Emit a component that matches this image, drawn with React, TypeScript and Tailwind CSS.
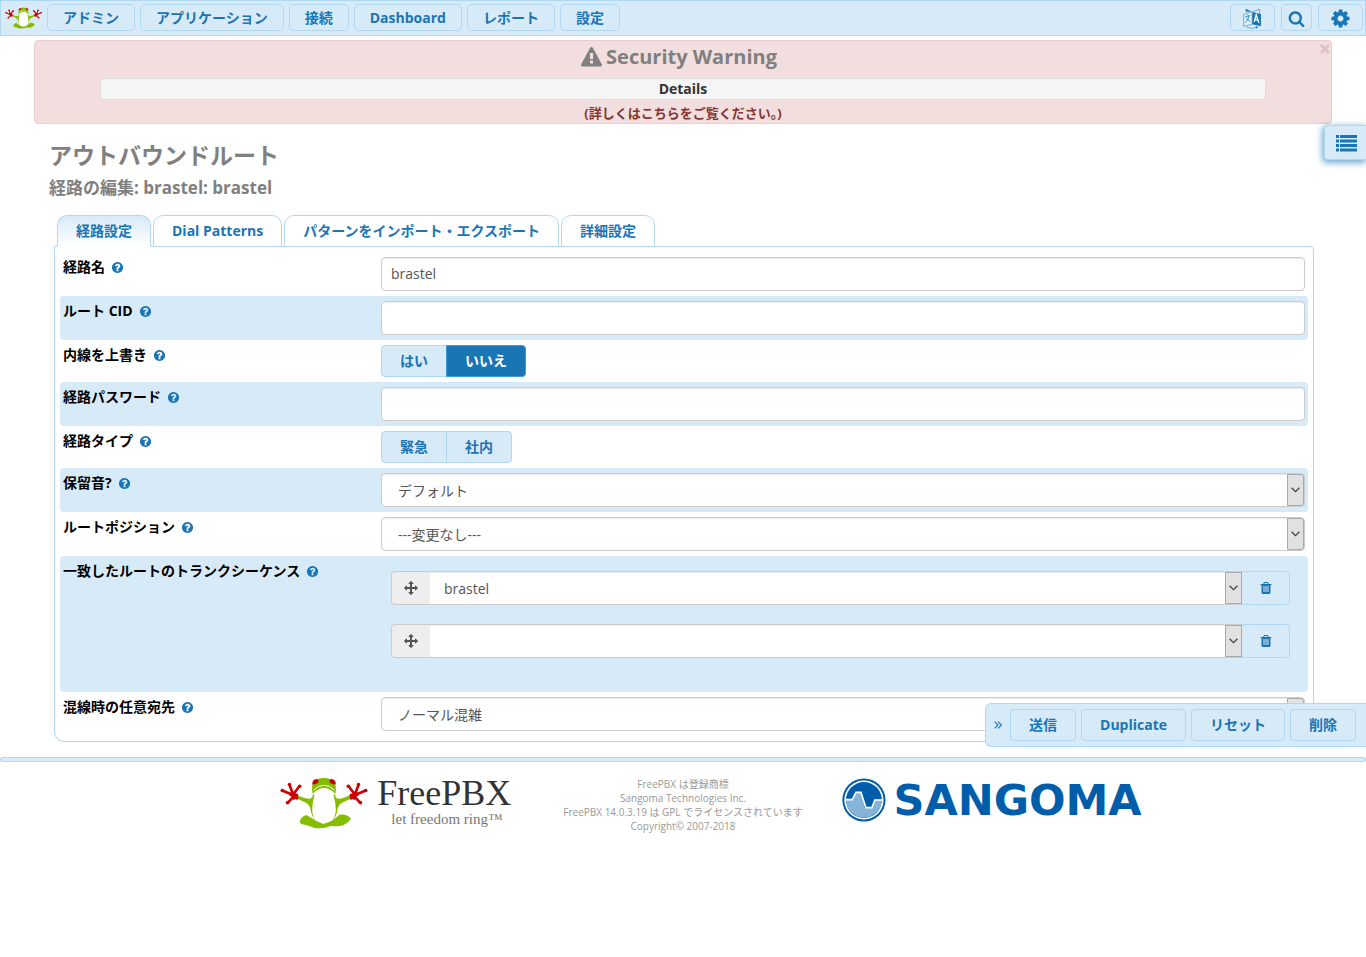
import React, { useState } from 'react';

const ICONS = {
  search:
    'M1216 832q0-185-131.5-316.5t-316.5-131.5-316.5 131.5-131.5 316.5 131.5 316.5 316.5 131.5 316.5-131.5 131.5-316.5zm512 832q0 52-38 90t-90 38q-54 0-90-38l-343-342q-179 124-399 124-143 0-273.5-55.5t-225-150-150-225-55.5-273.5 55.5-273.5 150-225 225-150 273.5-55.5 273.5 55.5 225 150 150 225 55.5 273.5q0 220-124 399l343 343q37 37 37 90z',
  cog: 'M1152 896q0-106-75-181t-181-75-181 75-75 181 75 181 181 75 181-75 75-181zm512-109v222q0 12-8 23t-20 13l-185 28q-19 54-39 91 35 50 107 138 10 12 10 25t-9 23q-27 37-99 108t-94 71q-12 0-26-9l-138-108q-44 23-91 38-16 136-29 186-7 28-36 28h-222q-14 0-24.5-8.5t-11.5-21.5l-28-184q-49-16-90-37l-141 107q-10 9-25 9-14 0-25-11-126-114-165-168-7-10-7-23 0-12 8-23 15-21 51-66.5t54-70.5q-27-50-41-99l-183-27q-13-2-21-12.5t-8-23.5v-222q0-12 8-23t19-13l186-28q14-46 39-92-40-57-107-138-10-12-10-24 0-10 9-23 26-36 98.5-107.5t94.5-71.5q13 0 26 10l138 107q44-23 91-38 16-136 29-186 7-28 36-28h222q14 0 24.5 8.5t11.5 21.5l28 184q49 16 90 37l142-107q9-9 24-9 13 0 25 10 129 119 165 170 7 8 7 22 0 12-8 23-15 21-51 66.5t-54 70.5q26 50 41 98l183 28q13 2 21 12.5t8 23.5z',
  help: 'M1024 1376v-192q0-14-9-23t-23-9h-192q-14 0-23 9t-9 23v192q0 14 9 23t23 9h192q14 0 23-9t9-23zm256-672q0-88-55.5-163t-138.5-116-170-41q-243 0-371 213-15 24 8 42l132 100q7 6 19 6 16 0 25-12 53-68 86-92 34-24 86-24 48 0 85.5 26t37.5 59q0 38-20 61t-68 45q-63 28-115.5 86.5t-52.5 125.5v36q0 14 9 23t23 9h192q14 0 23-9t9-23q0-19 21.5-49.5t54.5-49.5q32-18 49-28.5t46-35 44.5-48 28-60.5 12.5-81zm384 192q0 209-103 385.5t-279.5 279.5-385.5 103-385.5-103-279.5-279.5-103-385.5 103-385.5 279.5-279.5 385.5-103 385.5 103 279.5 279.5 103 385.5z',
  warning:
    'M1024 1375v-190q0-14-9.5-23.5t-22.5-9.5h-192q-13 0-22.5 9.5t-9.5 23.5v190q0 14 9.5 23.5t22.5 9.5h192q13 0 22.5-9.5t9.5-23.5zm-2-374l18-459q0-12-10-19-13-11-24-11h-220q-11 0-24 11-10 7-10 21l17 457q0 10 10 16.5t24 6.5h185q14 0 23.5-6.5t10.5-16.5zm-14-934l768 1408q35 63-2 126-17 29-46.5 46t-63.5 17h-1536q-34 0-63.5-17t-46.5-46q-37-63-2-126l768-1408q17-31 47-49t65-18 65 18 47 49z',
  move: 'M1792 896q0 26-19 45l-256 256q-19 19-45 19t-45-19-19-45v-128h-384v384h128q26 0 45 19t19 45-19 45l-256 256q-19 19-45 19t-45-19l-256-256q-19-19-19-45t19-45 45-19h128v-384h-384v128q0 26-19 45t-45 19-45-19l-256-256q-19-19-19-45t19-45l256-256q19-19 45-19t45 19 19 45v128h384v-384h-128q-26 0-45-19t-19-45 19-45l256-256q19-19 45-19t45 19l256 256q19 19 19 45t-19 45-45 19h-128v384h384v-128q0-26 19-45t45-19 45 19l256 256q19 19 19 45z',
  trash:
    'M704 1376v-704q0-14-9-23t-23-9h-64q-14 0-23 9t-9 23v704q0 14 9 23t23 9h64q14 0 23-9t9-23zm256 0v-704q0-14-9-23t-23-9h-64q-14 0-23 9t-9 23v704q0 14 9 23t23 9h64q14 0 23-9t9-23zm256 0v-704q0-14-9-23t-23-9h-64q-14 0-23 9t-9 23v704q0 14 9 23t23 9h64q14 0 23-9t9-23zm-544-992h448l-48-117q-7-9-17-11h-317q-10 2-17 11zm928 32v64q0 14-9 23t-23 9h-96v948q0 83-47 143.5t-113 60.5h-832q-66 0-113-58.5t-47-141.5v-952h-96q-14 0-23-9t-9-23v-64q0-14 9-23t23-9h309l70-167q15-37 54-63t79-26h320q40 0 79 26t54 63l70 167h309q14 0 23 9t9 23z',
};

function Icon({ name, className }: { name: keyof typeof ICONS; className: string }) {
  return (
    <svg viewBox="0 0 1792 1792" className={className} fill="currentColor" aria-hidden="true">
      <path d={ICONS[name]} />
    </svg>
  );
}

function LanguageIcon() {
  return (
    <svg viewBox="0 0 56 62" className="h-[21px] w-[19px]" aria-hidden="true">
      <path d="M27 12 53 18v36L27 48Z" fill="#1a75b5" />
      <path d="M8 2v9l18-1Z" fill="#1a75b5" />
      <path d="M28 11 49 4v13" fill="none" stroke="#1a75b5" strokeWidth="1.6" />
      <path d="M2 19 27 12v36L2 54Z" fill="#e4f1fa" stroke="#1a75b5" strokeWidth="1.6" />
      <path d="M7 26l15-4M14 20v4M18 23q-2 12-11 20M9 28q4 8 13 12" fill="none" stroke="#1a75b5" strokeWidth="2.2" />
      <path d="M33 41l6-21 8 24M35 34l9 2" fill="none" stroke="#fff" strokeWidth="4" />
      <path d="M10 56q14 8 32 1" fill="none" stroke="#1a75b5" strokeWidth="1.6" />
      <path d="M37 54l8 1-5 6Z" fill="#1a75b5" />
    </svg>
  );
}

function Frog({ className }: { className: string }) {
  return (
    <svg viewBox="28 34 268 156" className={className} role="img" aria-label="FreePBX">
      <path
        d="M89 165Q97 149 110 149Q128 160 160 176Q188 168 209 148Q228 143 243 158Q244 168 222 179Q205 185 184 181Q162 191 133 188Q120 182 96 177Q86 173 89 165Z"
        fill="#84bd00"
      />
      <path
        d="M128 84Q144 66 162 66Q182 67 195 84L203 130Q202 160 180 168Q162 177 142 168Q121 160 122 130Z"
        fill="#fff"
      />
      <path
        d="M73 96L79 87Q105 101 121 99Q130 92 128 84L133 88Q126 112 126 135Q127 154 139 166Q124 154 121 132Q118 117 108 112Q92 103 73 96Z"
        fill="#84bd00"
      />
      <path
        d="M250 96L242 86Q218 101 203 99Q194 94 196 84L191 88Q198 112 198 135Q197 154 186 166Q200 156 203 132Q206 117 216 112Q231 104 250 96Z"
        fill="#84bd00"
      />
      <path
        d="M128 84Q122 66 130 48Q143 35 162 36Q180 35 193 48Q202 66 196 84Q180 66 162 66Q144 66 128 84Z"
        fill="#84bd00"
      />
      <path d="M130 73Q145 58 162 58Q179 58 194 73" fill="none" stroke="#fff" strokeWidth="3" />
      <path d="M126 56Q126 40 140 39Q150 43 143 51Q136 56 126 56Z" fill="#c00" />
      <path d="M198 56Q198 40 184 39Q174 43 181 51Q188 56 198 56Z" fill="#c00" />
      <g fill="none" stroke="#c00" strokeLinecap="round" strokeLinejoin="round">
        <path d="M35 74L66 87M57 57L68 86L87 61M52 111L70 92L80 98" strokeWidth="8" />
        <path d="M289 74L258 87M267 57L256 86L237 61M272 111L254 92L244 98" strokeWidth="8" />
        <path d="M62 86L78 89L70 96M262 86L246 89L254 96" strokeWidth="12" />
      </g>
      <g fill="#c00">
        <circle cx="35" cy="74" r="5.5" />
        <circle cx="57" cy="56" r="5.5" />
        <circle cx="88" cy="61" r="5.5" />
        <circle cx="51" cy="111" r="5.5" />
        <circle cx="289" cy="74" r="5.5" />
        <circle cx="267" cy="56" r="5.5" />
        <circle cx="236" cy="61" r="5.5" />
        <circle cx="273" cy="111" r="5.5" />
      </g>
    </svg>
  );
}

function SangomaMark() {
  return (
    <svg viewBox="0 0 132 132" className="h-11 w-11" aria-hidden="true">
      <circle cx="66" cy="66" r="65" fill="#005daa" />
      <circle cx="66" cy="66" r="59" fill="#fff" />
      <circle cx="66" cy="66" r="54" fill="#005daa" />
      <path d="M12 65H34L42 42H57L69 90H90L99 65H120A54 54 0 0 1 12 65Z" fill="#86b4d9" />
      <path d="M11 65H31L42 43H57L72 89H90L99 66H121" fill="none" stroke="#fff" strokeWidth="5" />
    </svg>
  );
}

const NAV = ['アドミン', 'アプリケーション', '接続', 'Dashboard', 'レポート', '設定'];
const TABS = ['経路設定', 'Dial Patterns', 'パターンをインポート・エクスポート', '詳細設定'];

const navButton =
  'flex h-[27px] items-center justify-center rounded-[5px] border border-[#b0d8f3] bg-[#d7eaf8] pt-px font-bold text-[#1a75b5] hover:bg-[#c3e0f5]';
const actionButton =
  'h-8 rounded border border-[#b0d8f3] bg-[#d7eaf8] px-[18px] font-bold text-[#1a75b5] hover:bg-[#c3e0f5]';
const field =
  'block h-[34px] w-full rounded border border-[#ccc] bg-white text-[#555] shadow-[inset_0_1px_1px_rgba(0,0,0,0.08)] outline-none focus:border-[#66afe9]';

function Row({
  label,
  htmlFor,
  striped,
  children,
}: {
  label: string;
  htmlFor?: string;
  striped?: boolean;
  children: React.ReactNode;
}) {
  return (
    <div className={`grid grid-cols-[318px_1fr] rounded px-[3px] py-[5px] ${striped ? 'bg-[#d7eaf8]' : ''}`}>
      <div className="flex h-5 items-center gap-1.5 font-bold text-black">
        {htmlFor ? <label htmlFor={htmlFor}>{label}</label> : <span id={`label-${label}`}>{label}</span>}
        <Icon name="help" className="h-[13px] w-[13px] text-[#1a75b5]" />
      </div>
      {children}
    </div>
  );
}

function SelectArrow({ className }: { className: string }) {
  return (
    <span
      className={`pointer-events-none absolute flex w-[17px] items-center justify-center border border-[#aaa] bg-[#e1e1e1] ${className}`}
    >
      <svg viewBox="0 0 9 6" className="h-1.5 w-[9px]" aria-hidden="true">
        <path d="M.6 .8 4.5 4.6 8.4 .8" fill="none" stroke="#444" strokeWidth="1.3" />
      </svg>
    </span>
  );
}

function Select({ id, options }: { id: string; options: string[] }) {
  return (
    <div className="relative">
      <select id={id} className={`${field} appearance-none pt-0.5 pr-6 pl-4`}>
        {options.map((o) => (
          <option key={o}>{o}</option>
        ))}
      </select>
      <SelectArrow className="top-px right-px bottom-px rounded-r-[3px]" />
    </div>
  );
}

function Toggle({
  name,
  options,
  initial,
}: {
  name: string;
  options: string[];
  initial?: string;
}) {
  const [value, setValue] = useState(initial);
  return (
    <div className="flex h-8" role="radiogroup" aria-labelledby={`label-${name}`}>
      {options.map((o, i) => (
        <label
          key={o}
          className={`flex cursor-pointer items-center border px-[18px] font-bold ${i === 0 ? 'rounded-l' : '-ml-px rounded-r'} ${
            value === o ? 'border-[#3c9bdc] bg-[#1a75b5] text-white' : 'border-[#b0d8f3] bg-[#d7eaf8] text-[#1a75b5]'
          }`}
        >
          <input
            type="radio"
            name={name}
            className="sr-only"
            checked={value === o}
            onChange={() => setValue(o)}
          />
          {o}
        </label>
      ))}
    </div>
  );
}

function Trunk({ value, index }: { value: string; index: number }) {
  return (
    <div className="flex h-[34px]">
      <span className="flex w-[39px] items-center justify-center rounded-l border border-r-0 border-[#ccc] bg-[#eee] text-[#555]">
        <Icon name="move" className="h-3.5 w-3.5" />
      </span>
      <div className="relative flex-1">
        <select
          aria-label={`トランク ${index}`}
          className="block h-[34px] w-full appearance-none border-y border-[#ccc] bg-white pt-0.5 pr-6 pl-3.5 text-[#555] shadow-[inset_0_1px_1px_rgba(0,0,0,0.08)] outline-none"
        >
          <option>{value}</option>
        </select>
        <SelectArrow className="top-px right-0 bottom-px" />
      </div>
      <button
        type="button"
        aria-label="削除"
        className="flex w-12 items-center justify-center rounded-r border border-l-0 border-[#b0d8f3] bg-[#d7eaf8] text-[#1a75b5]"
      >
        <Icon name="trash" className="h-3.5 w-3.5" />
      </button>
    </div>
  );
}

export default function App() {
  const [tab, setTab] = useState(0);
  return (
    <div className="bg-white font-['Open_Sans','Noto_Sans_CJK_JP',sans-serif] text-[14px] leading-5">
      <header className="flex h-9 items-center gap-[5px] border border-[#b0d8f3] bg-[#d7eaf8] pr-0.5 pb-px pl-1">
        <a href="#home" className="block w-[37px]">
          <Frog className="h-[22px] w-[37px]" />
        </a>
        <nav className="flex gap-[5px]">
          {NAV.map((n) => (
            <button key={n} type="button" className={`${navButton} px-[15px]`}>
              {n}
            </button>
          ))}
        </nav>
        <div className="ml-auto flex gap-1.5">
          <button type="button" aria-label="言語" className={`${navButton} w-[45px]`}>
            <LanguageIcon />
          </button>
          <button type="button" aria-label="検索" className={`${navButton} w-[31px]`}>
            <Icon name="search" className="h-[17px] w-[17px]" />
          </button>
          <button type="button" aria-label="設定メニュー" className={`${navButton} w-[45px]`}>
            <Icon name="cog" className="h-[21px] w-[21px]" />
          </button>
        </div>
      </header>

      <main className="relative pt-1 pb-[15px]">
        <section className="relative mx-[34px] h-[84px] rounded border border-[#ebccd1] bg-[#f2dede] px-[65px] text-center">
          <h2 className="flex h-8 items-center justify-center gap-1 pr-2 text-[20px] font-bold text-[#808080]">
            <Icon name="warning" className="h-[21px] w-[21px]" />
            Security Warning
          </h2>
          <button
            type="button"
            className="mt-[5px] block h-[22px] w-full rounded-[3px] border border-[#ddd] bg-[#f5f5f5] font-bold text-[#333]"
          >
            <span className="block leading-[18px]">Details</span>
          </button>
          <a href="#details" className="mt-[3px] block text-[13px] font-bold text-[#843534]">
            (詳しくはこちらをご覧ください。)
          </a>
          <button type="button" aria-label="閉じる" className="absolute top-[3px] right-px">
            <svg viewBox="0 0 10 10" className="h-2.5 w-2.5" aria-hidden="true">
              <path d="M1 1l8 8M9 1l-8 8" stroke="#e2c2c2" strokeWidth="3" />
            </svg>
          </button>
        </section>

        <button
          type="button"
          aria-label="一覧"
          className="absolute top-[89px] right-0 flex h-[35px] w-[42px] items-center rounded-l border border-r-0 border-[#b0d8f3] bg-[#d7eaf8] pt-0.5 pl-[11px] text-[#1a75b5] shadow-[-1px_2px_6px_1px_rgba(26,117,181,0.6)]"
        >
          <svg viewBox="0 0 21 17" className="h-[17px] w-[21px]" fill="currentColor" aria-hidden="true">
            <path d="M0 0h3v3H0zM4 0h17v3H4zM0 4.5h3v3H0zM4 4.5h17v3H4zM0 9h3v3H0zM4 9h17v3H4zM0 13.5h3v3H0zM4 13.5h17v3H4z" />
          </svg>
        </button>

        <div className="pt-[15px] pl-[49px] font-bold text-[#808080]">
          <h1 className="text-[23px] leading-8">アウトバウンドルート</h1>
          <h2 className="text-[17px] leading-[33px]">経路の編集: brastel: brastel</h2>
        </div>

        <div className="mr-[52px] ml-[54px] pt-[11px]">
          <div className="relative z-10 flex gap-0.5 pl-[3px]" role="tablist">
            {TABS.map((t, i) => (
              <button
                key={t}
                type="button"
                role="tab"
                aria-selected={tab === i}
                onClick={() => setTab(i)}
                className={`h-8 rounded-t-[10px] border px-[18px] font-bold text-[#1a75b5] ${
                  tab === i
                    ? 'border-[#b0d8f3] border-b-white bg-linear-to-b from-[#d7eaf8] to-white'
                    : 'border-[#b0d8f3] bg-white'
                }`}
              >
                {t}
              </button>
            ))}
          </div>
          <form
            className="-mt-px rounded-tr rounded-b-[10px] border border-[#b0d8f3] p-[5px]"
            onSubmit={(e) => e.preventDefault()}
          >
            <Row label="経路名" htmlFor="name">
              <input id="name" type="text" defaultValue="brastel" className={`${field} px-[9px] pb-0.5`} />
            </Row>
            <Row label="ルート CID" htmlFor="cid" striped>
              <input id="cid" type="text" className={`${field} px-[9px] pb-0.5`} />
            </Row>
            <Row label="内線を上書き">
              <Toggle name="内線を上書き" options={['はい', 'いいえ']} initial="いいえ" />
            </Row>
            <Row label="経路パスワード" htmlFor="password" striped>
              <input id="password" type="text" className={`${field} px-[9px] pb-0.5`} />
            </Row>
            <Row label="経路タイプ">
              <Toggle name="経路タイプ" options={['緊急', '社内']} />
            </Row>
            <Row label="保留音?" htmlFor="moh" striped>
              <Select id="moh" options={['デフォルト']} />
            </Row>
            <Row label="ルートポジション" htmlFor="position">
              <Select id="position" options={['---変更なし---']} />
            </Row>
            <Row label="一致したルートのトランクシーケンス" striped>
              <div className="flex flex-col gap-[19px] pt-2.5 pr-[15px] pb-[29px] pl-2.5">
                <Trunk value="brastel" index={1} />
                <Trunk value="" index={2} />
              </div>
            </Row>
            <Row label="混線時の任意宛先" htmlFor="destination">
              <Select id="destination" options={['ノーマル混雑']} />
            </Row>
          </form>
        </div>

        <div className="absolute right-0 bottom-2.5 z-20 flex h-11 items-center gap-[5px] rounded-l-md border border-r-0 border-[#b0d8f3] bg-[#d7eaf8] pr-2.5 pl-2">
          <button type="button" aria-label="折りたたむ" className="mr-[3px]">
            <svg viewBox="0 0 8 8" className="h-2 w-2" aria-hidden="true">
              <path d="M.6 .6 4 4 .6 7.4M4.1 .6 7.5 4 4.1 7.4" fill="none" stroke="#1a75b5" strokeWidth="1.1" />
            </svg>
          </button>
          <button type="submit" className={actionButton}>
            送信
          </button>
          <button type="button" className={actionButton}>
            Duplicate
          </button>
          <button type="reset" className={actionButton}>
            リセット
          </button>
          <button type="button" className={actionButton}>
            削除
          </button>
        </div>
      </main>

      <footer>
        <div className="h-[5px] rounded-xs border border-[#b0d8f3] bg-[#d7eaf8]" />
        <div className="flex items-start justify-center pt-[15px] pl-14">
          <a href="#freepbx" className="flex w-[231px] gap-[9px]">
            <Frog className="h-[52px] w-[89px]" />
            <span className="flex flex-col font-['Liberation_Serif',serif]">
              <span className="text-[36px] leading-8 text-[#333]">FreePBX</span>
              <span className="pl-3.5 text-[15px] leading-5 whitespace-nowrap text-[#777]">let freedom ring™</span>
            </span>
          </a>
          <p className="ml-[52px] text-center text-[10px] leading-[14px] whitespace-nowrap text-[#999]">
            <a href="#trademark">FreePBX は登録商標</a>
            <br />
            Sangoma Technologies Inc.
            <br />
            FreePBX 14.0.3.19 は GPL でライセンスされています
            <br />
            Copyright© 2007-2018
          </p>
          <a href="#sangoma" className="ml-[39px] flex w-[300px] items-center gap-2">
            <SangomaMark />
            <span className="font-['DejaVu_Sans',sans-serif] text-[43px] leading-[46px] font-bold text-[#005daa]">
              SANGOMA
            </span>
          </a>
        </div>
      </footer>
    </div>
  );
}
